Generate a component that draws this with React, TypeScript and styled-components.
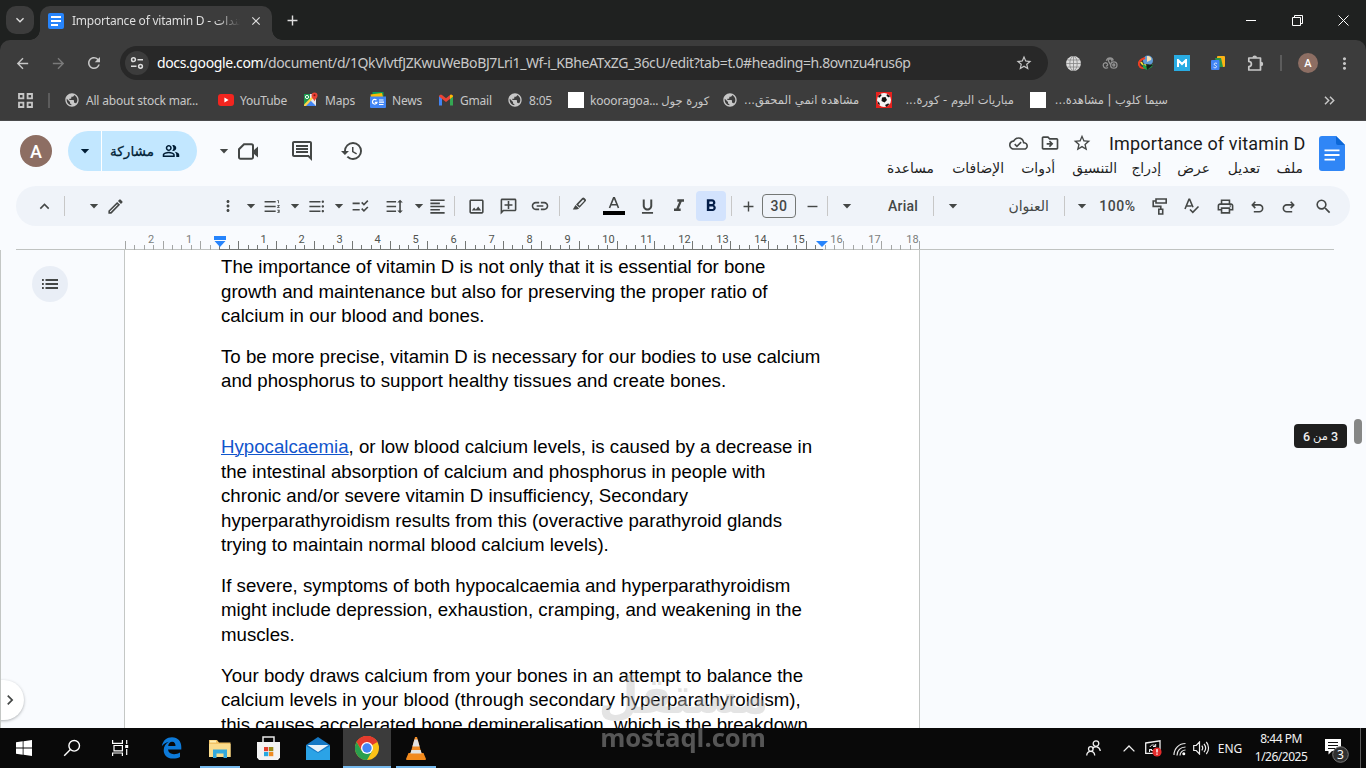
import React from 'react';
import styled, { createGlobalStyle } from 'styled-components';
import {
  MdArrowBack, MdArrowForward, MdRefresh, MdStarBorder, MdMoreVert, MdPublic, MdOutlinePeopleAlt, MdHistory,
  MdOutlineComment, MdOutlineCloudDone, MdOutlineDriveFileMove, MdSearch, MdOutlinePrint, MdOutlineEdit,
  MdFormatListNumberedRtl, MdFormatListBulleted, MdChecklistRtl, MdFormatLineSpacing, MdFormatAlignLeft,
  MdOutlineImage, MdOutlineAddComment, MdInsertLink, MdFormatItalic, MdFormatBold, MdFormatUnderlined,
  MdAdd, MdRemove, MdClose, MdKeyboardArrowDown, MdExpandLess, MdChevronRight,
} from 'react-icons/md';

const ui = `'Noto Sans', 'DejaVu Sans', sans-serif`;

const Global = createGlobalStyle`
  * { box-sizing: border-box; }
  html, body { margin: 0; background: #3c3c3c; overflow: hidden; }
  svg { display: block; flex: none; }
`;

const Screen = styled.div`
  width: 1366px; height: 768px; overflow: hidden; display: flex; flex-direction: column;
  position: relative; font-family: ${ui};
`;

/* every bar is a row of slots, each one as wide as the room it takes */
const Slot = styled.div<{ $w: number; $end?: boolean; $start?: boolean; $dy?: number; $color?: string }>`
  flex: 0 0 ${p => p.$w}px; min-width: 0; height: 100%; display: flex; align-items: center; white-space: nowrap;
  justify-content: ${p => (p.$end ? 'flex-end' : p.$start ? 'flex-start' : 'center')};
  padding-top: ${p => Math.max(0, (p.$dy || 0) * 2)}px;
  padding-bottom: ${p => Math.max(0, -(p.$dy || 0) * 2)}px;
  color: ${p => p.$color || 'inherit'};
`;

/* ---------- browser ---------- */
const TabStrip = styled.div`
  height: 40px; flex: none; background: #1f2120; display: flex; color: #dedede;
`;
const TabSearch = styled.div`
  width: 28px; height: 28px; border-radius: 10px; background: #3c3c3c; margin: 6px 6px 0;
  display: flex; align-items: center; justify-content: center;
`;
const Tab = styled.div`
  width: 232px; height: 34px; margin-top: 6px; border-radius: 10px 10px 0 0; background: #3c3c3c;
  display: flex; align-items: center; position: relative; padding: 0 8px 5px;
  &::before, &::after {
    content: ''; position: absolute; bottom: 0; width: 10px; height: 10px;
  }
  &::before { left: -10px; background: radial-gradient(circle at 0 0, transparent 9.5px, #3c3c3c 10px); }
  &::after { right: -10px; background: radial-gradient(circle at 100% 0, transparent 9.5px, #3c3c3c 10px); }
`;
const TabTitle = styled.div`
  font-size: 12px; width: 168px; margin: 0 9px 0 8px; white-space: nowrap; overflow: hidden; letter-spacing: -0.22px;
  mask-image: linear-gradient(90deg, #000 145px, transparent 168px);
`;
const NavBar = styled.div`
  height: 40px; flex: none; display: flex; background: #3c3c3c; border-radius: 10px 10px 0 0; color: #c7c7c7;
  padding-top: 6px;
`;
const NavBack = styled.div`background: #1f2120; flex: none;`;
const Omnibox = styled.div`
  width: 928px; height: 34px; border-radius: 17px; background: #282828; display: flex; align-items: center; flex: none;
`;
const SiteInfo = styled.div`
  width: 24px; height: 24px; border-radius: 12px; background: #3c3c3c; margin: 0 8px 0 5px;
  display: flex; align-items: center; justify-content: center;
`;
const Url = styled.div`
  font-size: 14px; letter-spacing: -0.385px; color: #c9c9c9; flex: 1; white-space: nowrap; padding-bottom: 2px;
  b { font-weight: 400; color: #fff; }
`;
const Bookmarks = styled.div`
  height: 41px; flex: none; display: flex; align-items: center; background: #3c3c3c; color: #c7c7c7;
  border-bottom: 1px solid #4a4a4c; font-size: 12px;
`;
const Mark = styled.div<{ $w: number; $ls?: number }>`
  width: ${p => p.$w}px; flex: none; display: flex; align-items: center; gap: 6px; white-space: nowrap;
  letter-spacing: ${p => p.$ls ?? -0.2}px;
`;
const ArabicMark = styled.span`
  font-family: 'DejaVu Sans', sans-serif; font-size: 11.5px; letter-spacing: 0;
`;
const BlankIcon = styled.i`width: 16px; height: 16px; background: #fff; flex: none;`;
const Rule = styled.i<{ $h: number; $c: string; $w?: number }>`
  width: ${p => p.$w || 1}px; height: ${p => p.$h}px; background: ${p => p.$c}; flex: none;
`;
const Avatar = styled.div<{ $d: number; $f: number }>`
  width: ${p => p.$d}px; height: ${p => p.$d}px; border-radius: 50%; background: #8d6e63; color: #fff; flex: none;
  font: 500 ${p => p.$f}px Roboto, sans-serif; display: flex; align-items: center; justify-content: center;
`;
const MTile = styled.div`
  width: 16px; height: 16px; background: #29ace3; display: flex; align-items: center; justify-content: center;
`;

/* ---------- editor ---------- */
const Editor = styled.div`
  flex: 1; min-height: 0; background: #f9fbfe; display: flex; flex-direction: column; color: #444746;
`;
const Header = styled.div`height: 65px; flex: none; display: flex; align-items: flex-start;`;
const HeaderTools = styled.div`height: 60px; display: flex; width: 862px; flex: none;`;
const Share = styled.div`
  width: 129px; height: 40px; border-radius: 20px; background: #c2e7ff; display: flex; color: #001d35; overflow: hidden;
  font: 500 13.6px 'DejaVu Sans', sans-serif; -webkit-text-stroke: 0.25px #001d35; flex: none;
`;
const TitleBlock = styled.div`width: 443px; height: 65px; display: flex; flex-direction: column;`;
const TitleRow = styled.div`height: 24px; margin-top: 10px; display: flex; justify-content: flex-end; align-items: center;`;
const DocTitle = styled.div`
  font: 400 18px Roboto, sans-serif; letter-spacing: 0.16px; color: #1a1a1a; width: 196px; white-space: nowrap;
`;
const MenuRow = styled.div`
  height: 24px; margin-top: 1px; padding-right: 2px; display: flex; direction: rtl; color: #1f1f1f;
  font: 400 13.9px 'DejaVu Sans', sans-serif;
`;
const Toolbar = styled.div`
  height: 40px; margin: 0 16px; padding: 0 10px; border-radius: 20px; background: #eff3f9; display: flex; flex: none;
`;
const BoldButton = styled.div`
  width: 30px; height: 30px; border-radius: 4px; background: #d3e3fd; color: #041e49; flex: none;
  display: flex; align-items: center; justify-content: center;
`;
const SizeBox = styled.div`
  width: 34px; height: 24px; border: 1px solid #747775; border-radius: 4px; font: 500 14px Roboto, sans-serif;
  display: flex; align-items: center; justify-content: center; letter-spacing: 0.5px; flex: none;
`;
const ToolText = styled.span<{ $ar?: boolean; $ls?: number }>`
  font: ${p => (p.$ar ? `400 14px 'DejaVu Sans'` : '500 14px Roboto')}, sans-serif; letter-spacing: ${p => p.$ls || 0}px;
`;
const Ruler = styled.div`
  height: 24px; flex: none; margin: 0 32px 0 16px; padding-left: 109px; border-bottom: 1px solid #c0c3c1;
`;
const Work = styled.div`
  flex: 1; min-height: 0; display: flex; overflow: hidden; border-left: 1px solid #c4c7c5; position: relative;
`;
const SideRail = styled.div`width: 123px; flex: none; padding: 16px 0 0 31px;`;
const Outline = styled.div`
  width: 36px; height: 36px; border-radius: 50%; background: #e9eef6; display: flex; align-items: center; justify-content: center;
`;
const Page = styled.div`
  width: 796px; height: 600px; background: #fff; border: solid #c4c7c5; border-width: 0 1px; flex: none;
  padding: 5.2px 0 0 96px; color: #000; font: 18.667px/24.56px 'Liberation Sans', Arial, sans-serif;
`;
const Para = styled.p<{ $gap?: number }>`
  margin: 0 0 ${p => p.$gap || 16}px; white-space: nowrap;
  a { color: #1155cc; text-decoration: underline; text-decoration-thickness: 1px; }
`;
const Expand = styled.div`
  position: absolute; left: -21px; bottom: 8px; width: 44px; height: 40px; border-radius: 20px; background: #fff;
  box-shadow: 0 1px 3px rgba(60, 64, 67, 0.4); display: flex; align-items: center; justify-content: flex-end; padding-right: 4px;
`;
const PageBadge = styled.div`
  position: absolute; left: 1293px; top: 174px; width: 53px; height: 24px; border-radius: 4px; background: #1f1f1f;
  color: #f0f0f0; font: 500 12.5px Roboto, 'DejaVu Sans', sans-serif; direction: rtl; display: flex;
  align-items: center; justify-content: center; gap: 3px;
  span:nth-child(2) { font-size: 11.5px; }
`;
const Thumb = styled.div`
  position: absolute; left: 1353px; top: 169px; width: 8px; height: 25px; border-radius: 4px; background: #868786;
`;

/* ---------- taskbar ---------- */
const Taskbar = styled.div`
  height: 40px; flex: none; background: #090909; display: flex; color: #f2f2f2; font-size: 12px;
`;
const TaskItem = styled.div<{ $w: number; $open?: boolean; $active?: boolean }>`
  width: ${p => p.$w}px; height: 40px; flex: none; display: flex; align-items: center; justify-content: center;
  background: ${p => (p.$active ? '#3b3b3b' : 'transparent')};
  box-shadow: ${p => (p.$open ? 'inset 0 -2px #76b9ed' : 'none')};
`;
const Clock = styled.div`
  line-height: 18px; text-align: center; letter-spacing: -0.5px;
`;
const Watermark = styled.div`
  position: absolute; left: 600px; top: 666px; width: 166px; height: 90px; color: rgb(192, 192, 192); opacity: 0.42;
  display: flex; flex-direction: column; align-items: center; white-space: nowrap;
`;
const WmArabic = styled.div`font: 700 50px/60px 'DejaVu Sans', sans-serif; transform: scaleX(0.93);`;
const WmLatin = styled.div`font: 700 25.600px/24px 'Open Sans', sans-serif;`;

/* ---------- icons ---------- */
const Caret = () => <svg width="10" height="5" viewBox="0 0 10 5"><path d="M.8 0h8.4L5 4.6z" fill="currentColor" /></svg>;

const DocsFav = () => (
  <svg width="16" height="16" viewBox="0 0 16 16"><rect width="16" height="16" rx="2" fill="#2684fc" />
    <path d="M3 4h10M3 8h10M3 12h7" stroke="#fff" strokeWidth="2" /></svg>
);
const DocsLogo = () => (
  <svg width="26" height="35" viewBox="0 0 26 35"><path d="M3 0h14l9 9v23a3 3 0 0 1-3 3H3a3 3 0 0 1-3-3V3a3 3 0 0 1 3-3z" fill="#3086f6" />
    <path d="M17 0l9 9h-7a2 2 0 0 1-2-2z" fill="#0c67d6" />
    <path d="M5.500 14.400h15M5.500 19h15M5.500 23.600h10.500" stroke="#fff" strokeWidth="1.800" /></svg>
);
const Tune = () => (
  <svg width="14" height="14" viewBox="0 0 14 14" fill="none" stroke="#dedede" strokeWidth="1.500">
    <circle cx="3.500" cy="3.700" r="1.900" /><path d="M7.500 3.700H13M1 10.300h5.500" /><circle cx="10.500" cy="10.300" r="1.900" /></svg>
);
const AppsGrid = () => (
  <svg width="15" height="15" viewBox="0 0 15 15" fill="none" stroke="currentColor" strokeWidth="1.800">
    <path d="M1 1h4.400v4.400H1zM9.600 1H14v4.400H9.600zM1 9.600h4.400V14H1zM9.600 9.600H14V14H9.600z" /></svg>
);
const YouTube = () => (
  <svg width="16" height="12" viewBox="0 0 16 12"><rect width="16" height="12" rx="3" fill="#f3251f" /><path d="M6.400 3.500v5L10.600 6z" fill="#fff" /></svg>
);
const MapsIcon = () => (
  <svg width="16" height="16" viewBox="0 0 16 16"><path d="M1 2h12v12H1z" fill="#e8eaed" /><path d="M1 2h6v6L1 14z" fill="#1e9a50" />
    <path d="M1 14l6-6 6 6z" fill="#4285f4" /><path d="M1 12.500L11 2.500l1.500 1.500L3 14H1z" fill="#fbd34a" /><circle cx="4" cy="5" r="1.600" fill="none" stroke="#fff" />
    <path d="M11.500 9.500C11 7 8.500 6.500 8.500 3.500a3 3 0 0 1 6 0c0 3-2.500 3.500-3 6z" fill="#ea4335" /><circle cx="11.500" cy="3.300" r="1" fill="#811411" /></svg>
);
const NewsIcon = () => (
  <svg width="16" height="16" viewBox="0 0 16 16"><path d="M2.500 0h11v5h-11z" fill="#0f9d58" /><path d="M.5 2.500L12 1l1 4H1z" fill="#fbbc04" />
    <path d="M0 4.500h16V15a1 1 0 0 1-1 1H1a1 1 0 0 1-1-1z" fill="#4285f4" /><path d="M6.500 8.200A2.300 2.300 0 1 0 7 10.300H4.800M9 8h4.500M9 10.200h5M9 12.500h4.500" fill="none" stroke="#fff" strokeWidth="1.200" /></svg>
);
const GmailIcon = () => (
  <svg width="16" height="16" viewBox="0 0 16 16"><path d="M1 4h3v9.500H1z" fill="#4285f4" /><path d="M12 4h3v9.500h-3z" fill="#34a853" />
    <path d="M1 4.500C1 2.500 3 2.300 4 3l4 3.200L12 3c1-.7 3-.5 3 1.500L8 10z" fill="#ea4335" /><path d="M12 3c1-.7 3-.5 3 1.500L12 7z" fill="#fbbc04" /></svg>
);
const Ball = () => (
  <svg width="16" height="16" viewBox="0 0 16 16"><path d="M0 0h16v16H0z" fill="#e8211d" /><circle cx="8" cy="8" r="7" fill="#f4f4f4" />
    <path d="M6 5.500l3.500-.5 1.500 3-2.500 2.500-3-1.500zM2 4l3-2 .5 1.500L3 6zM11 2l3 2-1 1.500-2.500-1.500zM1.500 9L3.500 11l.5 2-2-1zM9 13l3-1.500 1.500.5-3 3z" fill="#111" /></svg>
);
const NetGlobe = () => (
  <svg width="15" height="15" viewBox="0 0 15 15"><circle cx="7.500" cy="7.500" r="7.400" fill="#dcdcdc" />
    <path d="M7.500 0v15M0 7.500h15M1.500 4h12M1.500 11h12" stroke="#858585" strokeWidth=".8" /><ellipse cx="7.500" cy="7.500" rx="3.700" ry="7.200" fill="none" stroke="#858585" strokeWidth=".8" /></svg>
);
const Rings = () => (
  <svg width="16" height="14" viewBox="0 0 16 14" fill="none" stroke="#929292" strokeWidth="1.300"><circle cx="11.800" cy="9" r="3.200" /><circle cx="11.800" cy="9" r="1" />
    <path d="M4.300 4.800C5.500 1 10.500 1 11.300 4.500M9.500 5.500a1.700 1.700 0 1 0-2.600.3l2 3.400M6 11.500a3 3 0 0 1-4.800-2.300C1.200 6.500 4.500 6 5.500 8c.7 1.300-.5 2.400-1.600 1.800" /></svg>
);
const Idm = () => (
  <svg width="16" height="16" viewBox="0 0 16 16"><circle cx="10" cy="5.500" r="5" fill="#5e9bd6" /><path d="M9 1c3 0 5 2 4 4l-4 2z" fill="#f4ddb0" />
    <path d="M7 3C3 4 0 7 1 10s5 4 8 2" fill="none" stroke="#ee3f22" strokeWidth="2" /><path d="M3 7c1 3 4 4 7 3" fill="none" stroke="#ffdc33" strokeWidth="1.800" />
    <path d="M5 9l5 3 5-3-1 3-5 3-4-2z" fill="#1fa34a" /><path d="M8 9l7 1-6 5z" fill="#142418" /></svg>
);
const Translate = () => (
  <svg width="16" height="16" viewBox="0 0 16 16"><rect x="7" y="1" width="8" height="11" rx="1" fill="#fbb315" /><path d="M5 3h6l2 9H7z" fill="#27964a" />
    <rect x="1" y="5" width="8.500" height="10" rx="1" fill="#4285f4" /><path d="M7 8.500c-2-1-3.500 0-2.500 1.500 1 .8 2.500.8 2 2s-2.200 1-3 .2" stroke="#dce9ff" fill="none" /></svg>
);
const Puzzle = () => (
  <svg width="17" height="17" viewBox="0 0 17 17" fill="none" stroke="currentColor" strokeWidth="1.700" strokeLinejoin="round">
    <path d="M1.800 3H13.500v12H1.800v-3.300a2.300 2.300 0 0 0 0-5.200z" /><path d="M6 2.800a1.700 1.700 0 0 1 3.400 0M14 7.300a1.600 1.600 0 0 1 0 3.200" fill="currentColor" strokeWidth="1.200" /></svg>
);
const Video = () => (
  <svg width="21" height="17" viewBox="0 0 21 17"><path d="M6 1.200h7.500a1.500 1.500 0 0 1 1.500 1.500v11.600a1.500 1.500 0 0 1-1.500 1.500h-11A1.500 1.500 0 0 1 1 14.300V6.200z" fill="none" stroke="currentColor" strokeWidth="2" />
    <path d="M15 8l5-4.500v11L15 10z" fill="currentColor" /></svg>
);
const Roller = () => (
  <svg width="16" height="17" viewBox="0 0 16 17" fill="none" stroke="currentColor" strokeWidth="1.600"><path d="M4 1h10.200v4H4zM4 3H1.200v5.400h7.600v2.800M6.800 11.200h3.900V16H6.800z" /></svg>
);
const Spell = () => (
  <svg width="16" height="16" viewBox="0 0 16 16" fill="none" stroke="currentColor" strokeWidth="1.600"><path d="M1 11L5 1.200h.6L9 9.300M2.500 8h5M6 11.500l2.800 2.800L14.500 8.500" /></svg>
);
const Undo = ({ flip }: { flip?: boolean }) => (
  <svg width="13" height="12" viewBox="0 0 13 12" fill="none" stroke="currentColor" strokeWidth="1.600" transform={flip ? 'scale(-1 1)' : undefined}>
    <path d="M4.300.7L1.300 3.900l3 3.200M1.500 3.900h6.700a3.400 3.400 0 0 1 0 6.900H2.800" /></svg>
);
const ListIcon = () => (
  <svg width="16" height="10" viewBox="0 0 16 10"><path d="M0 1h1.800M0 5h1.800M0 9h1.800M3.500 1H16M3.500 5H16M3.500 9H16" stroke="currentColor" strokeWidth="1.800" /></svg>
);
const Highlighter = () => (
  <svg width="16" height="15" viewBox="0 0 16 15"><path d="M4 7.500L10.200 1a1.500 1.500 0 0 1 2.200 0l1.200 1.300a1.500 1.500 0 0 1 0 2L7.500 10.800zM6.300 7.600l1.200 1.200 4.800-5-1.200-1.200z" fill="currentColor" fillRule="evenodd" />
    <path d="M3.500 8l3.600 3.500-1.600.8-1.500.2H.8z" fill="currentColor" /></svg>
);
const TextColor = () => (
  <svg width="22" height="18" viewBox="0 0 22 18"><path d="M6.500 11L10.600.9h.8L15.500 11M8 7.700h6" stroke="currentColor" strokeWidth="1.600" fill="none" /><path d="M0 14h22v4H0z" fill="#000" /></svg>
);
const Divider = () => <Rule $h={20} $c="#c7c7c7" />;

const RulerMarks = () => {
  const marks: React.ReactNode[] = [];
  const unit = 37.83;
  for (let i = -10; i <= 74; i++) {
    const x = 94.8 + (i * unit) / 4;
    if (x > 795 || x < 0) continue;
    const long = ((i % 4) + 4) % 4 === 2;
    marks.push(<path key={i} d={`M${Math.floor(x) + 0.5} ${long ? 15 : 19}v8`} stroke={x < 94 || x > 698 ? '#a4a6a5' : '#747775'} />);
  }
  const nums = [];
  for (let n = -2; n <= 18; n++) {
    if (n === 0) continue;
    const x = n < 0 ? 102 + n * 38 : 100.5 + n * 38;
    nums.push(<text key={n} x={n > 9 ? x + 3 : x} y="17" textAnchor="middle" fill={n < 0 || n > 15 ? '#7b7e7c' : '#50534f'}>{Math.abs(n)}</text>);
  }
  return (
    <svg width="800" height="24" viewBox="0 0 800 24" fontFamily="Roboto" fontSize="11">
      {marks}
      <path d="M95 23.500h603" stroke="#747775" />
      {nums}
      <path d="M89 10h12v4H89zM89.500 15h11L95 21z" fill="#2684fc" />
      <path d="M691 15h12l-6 6z" fill="#2684fc" />
    </svg>
  );
};

/* ---------- taskbar icons ---------- */
const WinLogo = () => <svg width="16" height="16" viewBox="0 0 16 16"><path d="M0 2.200L6.700 1.300v6.300H0zM7.500 1.200L16 0v7.600H7.500zM0 8.400h6.700v6.300L0 13.800zM7.500 8.400H16V16l-8.500-1.200z" fill="#fff" /></svg>;
const SearchThin = () => <svg width="18" height="18" viewBox="0 0 18 18" fill="none" stroke="#fff" strokeWidth="1.400"><circle cx="11.200" cy="6.800" r="5.300" /><path d="M7.400 10.600L1.200 16.800" /></svg>;
const TaskView = () => <svg width="17" height="16" viewBox="0 0 17 16" fill="none" stroke="#fff" strokeWidth="1.200"><path d="M.6 0v3.300h9.800V0M2 5.500h8.400v5.300H2zM.6 16v-3h9.800v3M14.700 0v4M14.700 9v6" /><path d="M13.200 5h3v3h-3z" fill="#fff" stroke="none" /></svg>;
const Edge = () => <svg width="21" height="22" viewBox="0 0 21 22"><path d="M.8 9.300C1.800 3.500 6 .3 11 .3c6 0 9.300 4.300 9.300 9.700v2.600H7c.3 3 2.700 4.600 6 4.600 2.300 0 4.300-.6 6-1.600v4.300c-1.900 1.100-4.300 1.700-7 1.700C6 21.600 2.700 18 2.700 13.300c0-4 2-7 5.200-8.600C4.700 5.300 2.300 7 .8 9.300zM7.200 9h7.300c0-2.500-1-4.200-3.400-4.200C8.900 4.800 7.500 6.500 7.200 9z" fill="#0d7ad9" /></svg>;
const Folder = () => <svg width="22" height="19" viewBox="0 0 22 19"><path d="M0 1h8l2 2.500h11.500V18H0z" fill="#f2c366" /><path d="M1 1.500h6v2H1z" fill="#fff0b5" /><path d="M0 5h21.500v13H0z" fill="#fbdc8c" /><path d="M4 10.500h14V19h-3.500v-4.500h-7V19H4z" fill="#34a9dc" /></svg>;
const Store = () => <svg width="23" height="24" viewBox="0 0 23 24"><path d="M6 7V1h11v6" fill="none" stroke="#e8e8e8" strokeWidth="1.500" /><path d="M0 6h23v15.500L21 24H2L0 21.500z" fill="#f3f3f3" /><path d="M7 11h4.300v4.200H7z" fill="#e43f2d" /><path d="M12 11h4.300v4.200H12z" fill="#9a8b18" /><path d="M7 16h4.300v4.200H7z" fill="#26a8e0" /><path d="M12 16h4.300v4.200H12z" fill="#ef8b22" /></svg>;
const Mail = () => <svg width="24" height="23" viewBox="0 0 24 23"><path d="M0 8L12 0l12 8v15H0z" fill="#1578c4" /><path d="M1.500 8h21L12 15z" fill="#e9f3fa" /><path d="M0 9l12 7 12-7v14H0z" fill="#2ba3e6" /></svg>;
const Chrome = () => (
  <svg width="24" height="24" viewBox="0 0 24 24"><circle cx="12" cy="12" r="12" fill="#fbc116" />
    <path d="M12 12L1.600 6a12 12 0 0 1 20.800 0z" fill="#e33b2e" /><path d="M12 6H22.400A12 12 0 0 0 1.600 6L6.800 15z" fill="#e33b2e" />
    <path d="M1.600 6A12 12 0 0 0 12 24l5.200-9L12 12 6.800 15z" fill="#2a9f4e" /><circle cx="12" cy="12" r="6" fill="#fff" /><circle cx="12" cy="12" r="4.700" fill="#4285f4" /></svg>
);
const Vlc = () => <svg width="20" height="23" viewBox="0 0 20 23"><path d="M2.500 16h15l2.500 6a1 1 0 0 1-1 1H1a1 1 0 0 1-1-1z" fill="#f38a1c" /><path d="M9 0h2l4.800 17.500c-2 2.200-9.600 2.200-11.600 0z" fill="#f08a24" /><path d="M8.400 2.500h3.200l2 7H6.400zM5.400 13h9.200l1.100 3.500H4.300z" fill="#e2e2e2" /></svg>;
const People = () => <svg width="15" height="16" viewBox="0 0 15 16" fill="none" stroke="#f0f0f0" strokeWidth="1.300"><circle cx="10" cy="3.600" r="2.800" /><path d="M6.500 8.500c2-2.600 7-2.600 7.800 2.500" /><circle cx="4.800" cy="9" r="2.300" /><path d="M.7 15.500c.3-5.500 7.800-5.500 8 0" /></svg>;
const UpdateIcon = () => <svg width="17" height="17" viewBox="0 0 17 17"><path d="M.7 3L15 .8v12.500H.7z" fill="none" stroke="#f0f0f0" strokeWidth="1.300" /><path d="M5 7c1-2.500 4-2.500 5.500-1M10.700 4v2.500H8M9.500 9.500c-1 1.500-4 1.500-5-.5M4.500 12V9.500H7" fill="none" stroke="#f0f0f0" /><circle cx="12" cy="12" r="4.600" fill="#e32b2b" /><path d="M12 9v3.500M12 13.500v1.300" stroke="#fff" strokeWidth="1.400" /></svg>;
const Wifi = () => <svg width="13" height="14" viewBox="0 0 13 14" fill="none" stroke="#e6e6e6" strokeWidth="1.200"><path d="M1 13C1 6.500 6 1.500 12.500 1.500M4 13.500C4 8.500 7.500 5 12.500 5M7 13.500c0-3 2.500-5.500 5.500-5.500" /><circle cx="10.800" cy="11.800" r="1.500" fill="#fff" stroke="none" /></svg>;
const Volume = () => <svg width="17" height="14" viewBox="0 0 17 14" fill="none" stroke="#f0f0f0" strokeWidth="1.200"><path d="M.7 4.500h2.500L6.500 1v12L3.200 9.500H.7zM8.800 4.700c1 1.300 1 3.300 0 4.600M11 2.800c2 2.500 2 5.900 0 8.400M13.300 1c3 3.500 3 8.500 0 12" /></svg>;
const Notice = () => <svg width="26" height="25" viewBox="0 0 26 25"><path d="M1 1h16v12H8l-3.500 3.500V13H1z" fill="#fff" /><path d="M4 4.500h10M4 7.500h10M4 10.500h7" stroke="#111" /><circle cx="16.500" cy="16.500" r="7.800" fill="#303030" stroke="#777" /><text x="16.500" y="21" textAnchor="middle" fill="#fff" fontSize="12" fontFamily="Noto Sans">3</text></svg>;

const menus: [string, number][] = [['ملف', 43], ['تعديل', 50], ['عرض', 49], ['إدراج', 44], ['التنسيق', 62], ['أدوات', 51], ['الإضافات', 70], ['مساعدة', 54]];

export default function App() {
  return (
    <Screen>
      <Global />
      <TabStrip>
        <TabSearch><MdKeyboardArrowDown size={16} /></TabSearch>
        <Tab><DocsFav /><TabTitle>Importance of vitamin D - مستندات Google</TabTitle><MdClose size={14} /></Tab>
        <Slot $w={40}><MdAdd size={17} /></Slot>
        <Slot $w={916} />
        <Slot $w={46}><Rule $w={10} $h={1} $c="#fff" /></Slot>
        <Slot $w={46}><svg width="11" height="11" viewBox="0 0 11 11" fill="none" stroke="#fff"><path d="M.5 2.500h8v8h-8zM2.500 2.500v-2h8v8h-2" /></svg></Slot>
        <Slot $w={46}><svg width="11" height="11" viewBox="0 0 11 11" stroke="#fff"><path d="M.5.5l10 10M10.500.5l-10 10" /></svg></Slot>
      </TabStrip>
      <NavBack>
        <NavBar>
          <Slot $w={44}><MdArrowBack size={17} /></Slot>
          <Slot $w={28} $color="#7a7a7a"><MdArrowForward size={17} /></Slot>
          <Slot $w={44}><MdRefresh size={18} /></Slot>
          <Slot $w={4} />
          <Omnibox>
            <SiteInfo><Tune /></SiteInfo>
            <Url><b>docs.google.com</b>/document/d/1QkVlvtfJZKwuWeBoBJ7Lri1_Wf-i_KBheATxZG_36cU/edit?tab=t.0#heading=h.8ovnzu4rus6p</Url>
            <Slot $w={48}><MdStarBorder size={18} /></Slot>
          </Omnibox>
          <Slot $w={7} />
          <Slot $w={36}><NetGlobe /></Slot>
          <Slot $w={37}><Rings /></Slot>
          <Slot $w={36}><Idm /></Slot>
          <Slot $w={36}><MTile><svg width="10" height="8" viewBox="0 0 10 8"><path d="M1 8V1l4 4 4-4v7" fill="none" stroke="#fff" strokeWidth="2" /></svg></MTile></Slot>
          <Slot $w={36}><Translate /></Slot>
          <Slot $w={38}><Puzzle /></Slot>
          <Slot $w={14}><Rule $w={2} $h={16} $c="#5c5c5c" /></Slot>
          <Slot $w={40}><Avatar $d={20} $f={11}>A</Avatar></Slot>
          <Slot $w={32}><MdMoreVert size={19} /></Slot>
        </NavBar>
      </NavBack>
      <Bookmarks>
        <Slot $w={48} $end><Slot $w={30} $start><AppsGrid /></Slot></Slot>
        <Slot $w={16} $start><Rule $w={2} $h={15} $c="#5c5c5c" /></Slot>
        <Mark $w={154}><MdPublic size={16} />All about stock mar...</Mark>
        <Mark $w={85}><YouTube />YouTube</Mark>
        <Mark $w={67}><MapsIcon />Maps</Mark>
        <Mark $w={68}><NewsIcon />News</Mark>
        <Mark $w={69}><GmailIcon />Gmail</Mark>
        <Mark $w={61}><MdPublic size={16} />8:05</Mark>
        <Mark $w={154}><BlankIcon /><span>koooragoa... <ArabicMark>كورة جول</ArabicMark></span></Mark>
        <Mark $w={154}><MdPublic size={16} /><ArabicMark dir="rtl">مشاهدة انمي المحقق...</ArabicMark></Mark>
        <Mark $w={154}><Ball /><Slot $w={116} $end><ArabicMark dir="rtl">مباريات اليوم - كورة...</ArabicMark></Slot></Mark>
        <Mark $w={264}><BlankIcon /><Slot $w={116} $end><ArabicMark dir="rtl">سيما كلوب | مشاهدة...</ArabicMark></Slot></Mark>
        <Slot $w={70}><svg width="11" height="9" viewBox="0 0 11 9" fill="none" stroke="currentColor" strokeWidth="1.500"><path d="M1 .8l3.700 3.700L1 8.200M6 .8l3.700 3.700L6 8.200" /></svg></Slot>
      </Bookmarks>

      <Editor>
        <Header>
          <HeaderTools>
            <Slot $w={4} />
            <Slot $w={64}><Avatar $d={32} $f={18}>A</Avatar></Slot>
            <Slot $w={129}>
              <Share>
                <Slot $w={33}><Caret /></Slot><Rule $h={40} $w={1} $c="#fff" />
                <Slot $w={60}>مشاركة</Slot><Slot $w={18}><MdOutlinePeopleAlt size={18} /></Slot>
              </Share>
            </Slot>
            <Slot $w={22} />
            <Slot $w={10}><Caret /></Slot>
            <Slot $w={38}><Video /></Slot>
            <Slot $w={70}><MdOutlineComment size={24} /></Slot>
            <Slot $w={29}><MdHistory size={24} /></Slot>
          </HeaderTools>
          <TitleBlock>
            <TitleRow>
              <Slot $w={32}><MdOutlineCloudDone size={19} /></Slot>
              <Slot $w={32}><MdOutlineDriveFileMove size={20} /></Slot>
              <Slot $w={32}><MdStarBorder size={20} /></Slot>
              <Slot $w={11} />
              <DocTitle>Importance of vitamin D</DocTitle>
            </TitleRow>
            <MenuRow>{menus.map(([t, w]) => <Slot key={t} $w={w} $start>{t}</Slot>)}</MenuRow>
          </TitleBlock>
          <Slot $w={54}><DocsLogo /></Slot>
        </Header>

        <Toolbar>
          <Slot $w={36}><MdExpandLess size={19} /></Slot>
          <Slot $w={4}><Divider /></Slot>
          <Slot $w={18} />
          <Slot $w={20}><Caret /></Slot>
          <Slot $w={22}><MdOutlineEdit size={19} /></Slot>
          <Slot $w={92} />
          <Slot $w={20}><MdMoreVert size={18} /></Slot>
          <Slot $w={2} />
          <Slot $w={22}><Caret /></Slot><Slot $w={20}><MdFormatListNumberedRtl size={19} /></Slot>
          <Slot $w={2} />
          <Slot $w={22}><Caret /></Slot><Slot $w={20}><MdFormatListBulleted size={19} transform="scale(-1 1)" /></Slot>
          <Slot $w={2} />
          <Slot $w={22}><Caret /></Slot><Slot $w={20}><MdChecklistRtl size={19} /></Slot>
          <Slot $w={14} />
          <Slot $w={20}><MdFormatLineSpacing size={19} transform="scale(-1 1)" /></Slot>
          <Slot $w={4} />
          <Slot $w={22}><Caret /></Slot><Slot $w={14}><MdFormatAlignLeft size={19} /></Slot>
          <Slot $w={8} />
          <Slot $w={4}><Divider /></Slot>
          <Slot $w={40}><MdOutlineImage size={19} /></Slot>
          <Slot $w={24}><MdOutlineAddComment size={19} transform="scale(-1 1)" /></Slot>
          <Slot $w={2} />
          <Slot $w={36}><MdInsertLink size={20} /></Slot>
          <Slot $w={2}><Divider /></Slot>
          <Slot $w={40} $dy={-2}><Highlighter /></Slot>
          <Slot $w={28}><TextColor /></Slot>
          <Slot $w={38}><MdFormatUnderlined size={19} /></Slot>
          <Slot $w={26}><MdFormatItalic size={20} /></Slot>
          <Slot $w={38}><BoldButton><MdFormatBold size={20} /></BoldButton></Slot>
          <Slot $w={2}><Divider /></Slot>
          <Slot $w={32}><MdAdd size={17} /></Slot>
          <Slot $w={30}><SizeBox>30</SizeBox></Slot>
          <Slot $w={4} />
          <Slot $w={28}><MdRemove size={17} /></Slot>
          <Slot $w={2}><Divider /></Slot>
          <Slot $w={38}><Caret /></Slot>
          <Slot $w={22} />
          <Slot $w={30}><ToolText $ls={0.2}>Arial</ToolText></Slot>
          <Slot $w={14} />
          <Slot $w={2}><Divider /></Slot>
          <Slot $w={38}><Caret /></Slot>
          <Slot $w={77} $end><ToolText $ar>العنوان</ToolText></Slot>
          <Slot $w={14} />
          <Slot $w={2}><Divider /></Slot>
          <Slot $w={34}><Caret /></Slot>
          <Slot $w={37}><ToolText $ls={0.6}>100%</ToolText></Slot>
          <Slot $w={14} />
          <Slot $w={20}><Roller /></Slot>
          <Slot $w={12} />
          <Slot $w={20}><Spell /></Slot>
          <Slot $w={13} />
          <Slot $w={20}><MdOutlinePrint size={19} /></Slot>
          <Slot $w={12} />
          <Slot $w={20} $dy={1}><Undo /></Slot>
          <Slot $w={11} />
          <Slot $w={20} $dy={1}><Undo flip /></Slot>
          <Slot $w={15} />
          <Slot $w={20}><MdSearch size={19} /></Slot>
        </Toolbar>

        <Ruler><RulerMarks /></Ruler>

        <Work>
          <SideRail><Outline><ListIcon /></Outline></SideRail>
          <Page>
            <Para>The importance of vitamin D is not only that it is essential for bone<br />growth and maintenance but also for preserving the proper ratio of<br />calcium in our blood and bones.</Para>
            <Para $gap={41}>To be more precise, vitamin D is necessary for our bodies to use calcium<br />and phosphorus to support healthy tissues and create bones.</Para>
            <Para><a>Hypocalcaemia</a>, or low blood calcium levels, is caused by a decrease in<br />the intestinal absorption of calcium and phosphorus in people with<br />chronic and/or severe vitamin D insufficiency, Secondary<br />hyperparathyroidism results from this (overactive parathyroid glands<br />trying to maintain normal blood calcium levels).</Para>
            <Para>If severe, symptoms of both hypocalcaemia and hyperparathyroidism<br />might include depression, exhaustion, cramping, and weakening in the<br />muscles.</Para>
            <Para>Your body draws calcium from your bones in an attempt to balance the<br />calcium levels in your blood (through secondary hyperparathyroidism),<br />this causes accelerated bone demineralisation, which is the breakdown</Para>
          </Page>
          <PageBadge><span>3</span><span>من</span><span>6</span></PageBadge>
          <Thumb />
          <Expand><MdChevronRight size={20} /></Expand>
        </Work>
      </Editor>

      <Taskbar>
        <TaskItem $w={48}><WinLogo /></TaskItem>
        <TaskItem $w={48}><SearchThin /></TaskItem>
        <TaskItem $w={48}><TaskView /></TaskItem>
        <Slot $w={3} />
        <TaskItem $w={48}><Edge /></TaskItem>
        <Slot $w={5} />
        <TaskItem $w={40} $open><Folder /></TaskItem>
        <Slot $w={4} />
        <TaskItem $w={49}><Store /></TaskItem>
        <TaskItem $w={50}><Mail /></TaskItem>
        <TaskItem $w={48} $open $active><Chrome /></TaskItem>
        <Slot $w={5} />
        <TaskItem $w={40} $open><Vlc /></TaskItem>
        <Slot $w={642} />
        <Slot $w={30}><People /></Slot>
        <Slot $w={42}><svg width="12" height="7" viewBox="0 0 12 7" fill="none" stroke="#f0f0f0" strokeWidth="1.300"><path d="M.6 6.400L6 1l5.400 5.400" /></svg></Slot>
        <Slot $w={7}><UpdateIcon /></Slot>
        <Slot $w={44} $dy={1}><Wifi /></Slot>
        <Slot $w={1}><Volume /></Slot>
        <Slot $w={56}>ENG</Slot>
        <Slot $w={46}><Clock>8:44 PM<br />1/26/2025</Clock></Slot>
        <Slot $w={15} />
        <Slot $w={36} $dy={2}><Notice /></Slot>
        <Slot $w={5} />
        <Rule $h={40} $c="#5a5a5a" />
      </Taskbar>

      <Watermark><WmArabic>مستقل</WmArabic><WmLatin>mostaql.com</WmLatin></Watermark>
    </Screen>
  );
}
